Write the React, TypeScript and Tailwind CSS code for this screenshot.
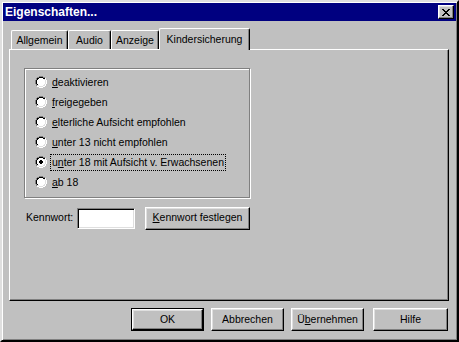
const font = { fontFamily: '"Liberation Sans", Arial, sans-serif' };

const raised =
  "border border-t-white border-l-white border-r-black border-b-black shadow-[inset_-1px_-1px_#808080,inset_1px_1px_#dfdfdf]";

// 12x12 win95 radio bitmap
const radioMap = [
  "....GGGG....",
  "..GGKKKKGG..",
  ".GKKwwwwKKW.",
  ".GKwwwwwwLW.",
  "GKwwwwwwwwLW",
  "GKwwwwwwwwLW",
  "GKwwwwwwwwLW",
  "GKwwwwwwwwLW",
  ".GKwwwwwwLW.",
  ".GLLwwwwLLW.",
  "..WWLLLLWW..",
  "....WWWW....",
];
const dotMap = [".KK.", "KKKK", "KKKK", ".KK."];
const colors: Record<string, string> = { G: "#808080", K: "#000000", W: "#ffffff", L: "#dfdfdf", w: "#ffffff" };

function Radio({ checked }: { checked?: boolean }) {
  const rects: React.ReactNode[] = [];
  radioMap.forEach((row, y) =>
    row.split("").forEach((c, x) => {
      if (c !== ".") rects.push(<rect key={`${x}-${y}`} x={x} y={y} width={1} height={1} fill={colors[c]} />);
    })
  );
  if (checked)
    dotMap.forEach((row, y) =>
      row.split("").forEach((c, x) => {
        if (c !== ".") rects.push(<rect key={`d${x}-${y}`} x={x + 4} y={y + 4} width={1} height={1} fill="#000" />);
      })
    );
  return (
    <svg width="12" height="12" viewBox="0 0 12 12" shapeRendering="crispEdges" className="shrink-0">
      {rects}
    </svg>
  );
}

function Option({ pre = "", acc, post, checked }: { pre?: string; acc: string; post: string; checked?: boolean }) {
  return (
    <div className="flex items-center h-[20px] pl-[10px] gap-[3px]">
      <Radio checked={checked} />
      <span
        className={`px-[1px] leading-[15px] border ${checked ? "border-dotted border-black" : "border-transparent"}`}
      >
        {pre}
        <span className="underline">{acc}</span>
        {post}
      </span>
    </div>
  );
}

function Tab({ label, w, active }: { label: string; w: string; active?: boolean }) {
  return (
    <div
      className={`${w} ${
        active ? "h-[22px] -mb-[1px] relative z-10 pt-[3px]" : "h-[19px] pt-[2px]"
      } bg-[#c0c0c0] border-t border-l border-r border-t-white border-l-white border-r-black rounded-t-[2px] shadow-[inset_-1px_0_#808080] text-center whitespace-nowrap`}
    >
      {label}
    </div>
  );
}

function Button({ children, def, w = "w-[73px]" }: { children: React.ReactNode; def?: boolean; w?: string }) {
  const inner = <div className={`${raised} h-full flex items-center justify-center`}>{children}</div>;
  return def ? (
    <div className={`${w} h-[23px] border border-black`}>{inner}</div>
  ) : (
    <div className={`${w} h-[23px]`}>{inner}</div>
  );
}

export default function App() {
  return (
    <div
      style={font}
      className="w-[459px] h-[342px] bg-[#c0c0c0] border-2 border-t-[#dfdfdf] border-l-[#dfdfdf] border-r-black border-b-black shadow-[inset_1px_1px_#fff,inset_-1px_-1px_#808080] p-[1px] text-[10.5px] text-black flex flex-col"
    >
      {/* title bar */}
      <div className="h-[18px] bg-[#000080] flex items-center justify-between pl-[2px] pr-[2px]">
        <span className="text-white font-bold text-[12px]">Eigenschaften...</span>
        <div className={`${raised} w-[16px] h-[14px] flex items-center justify-center bg-[#c0c0c0]`}>
          <svg width="8" height="7" viewBox="0 0 8 7" shapeRendering="crispEdges">
            <path d="M0 0h2v1H0zM6 0h2v1H6zM1 1h2v1H1zM5 1h2v1H5zM2 2h4v1H2zM3 3h2v1H3zM2 4h4v1H2zM1 5h2v1H1zM5 5h2v1H5zM0 6h2v1H0zM6 6h2v1H6z" fill="#000" />
          </svg>
        </div>
      </div>

      <div className="pl-[6px] pt-[7px]">
        {/* tabs */}
        <div className="flex items-end h-[21px] pl-[2px]">
          <Tab label="Allgemein" w="w-[57px]" />
          <Tab label="Audio" w="w-[43px]" />
          <Tab label="Anzeige" w="w-[48px]" />
          <Tab label="Kindersicherung" w="w-[91px]" active />
        </div>

        {/* panel */}
        <div className="w-[440px] h-[252px] border border-t-white border-l-white border-r-black border-b-black shadow-[inset_-1px_-1px_#808080] pl-[14px] pt-[18px]">
          <div className="w-[226px] h-[130px] border border-[#808080] shadow-[1px_1px_#fff,inset_1px_1px_#fff] pt-[3px]">
            <Option acc="d" post="eaktivieren" />
            <Option acc="f" post="reigegeben" />
            <Option acc="e" post="lterliche Aufsicht empfohlen" />
            <Option acc="u" post="nter 13 nicht empfohlen" />
            <Option pre="u" acc="n" post="ter 18 mit Aufsicht v. Erwachsenen" checked />
            <Option acc="a" post="b 18" />
          </div>

          <div className="flex items-center mt-[9px] h-[22px]">
            <span className="w-[53px] pl-[2px]">Kennwort:</span>
            <div className="w-[58px] h-[21px] bg-white border border-t-[#808080] border-l-[#808080] border-r-white border-b-white shadow-[inset_1px_1px_#000,inset_-1px_-1px_#dfdfdf]" />
            <div className="ml-[10px]">
              <Button w="w-[105px]">
                <span>
                  <span className="underline">K</span>ennwort festlegen
                </span>
              </Button>
            </div>
          </div>
        </div>

        {/* buttons */}
        <div className="flex mt-[7px] pl-[122px]">
          <Button def>OK</Button>
          <div className="ml-[7px]">
            <Button>Abbrechen</Button>
          </div>
          <div className="ml-[7px]">
            <Button>
              <span>
                Ü<span className="underline">b</span>ernehmen
              </span>
            </Button>
          </div>
          <div className="ml-[9px]">
            <Button w="w-[75px]">Hilfe</Button>
          </div>
        </div>
      </div>
    </div>
  );
}
